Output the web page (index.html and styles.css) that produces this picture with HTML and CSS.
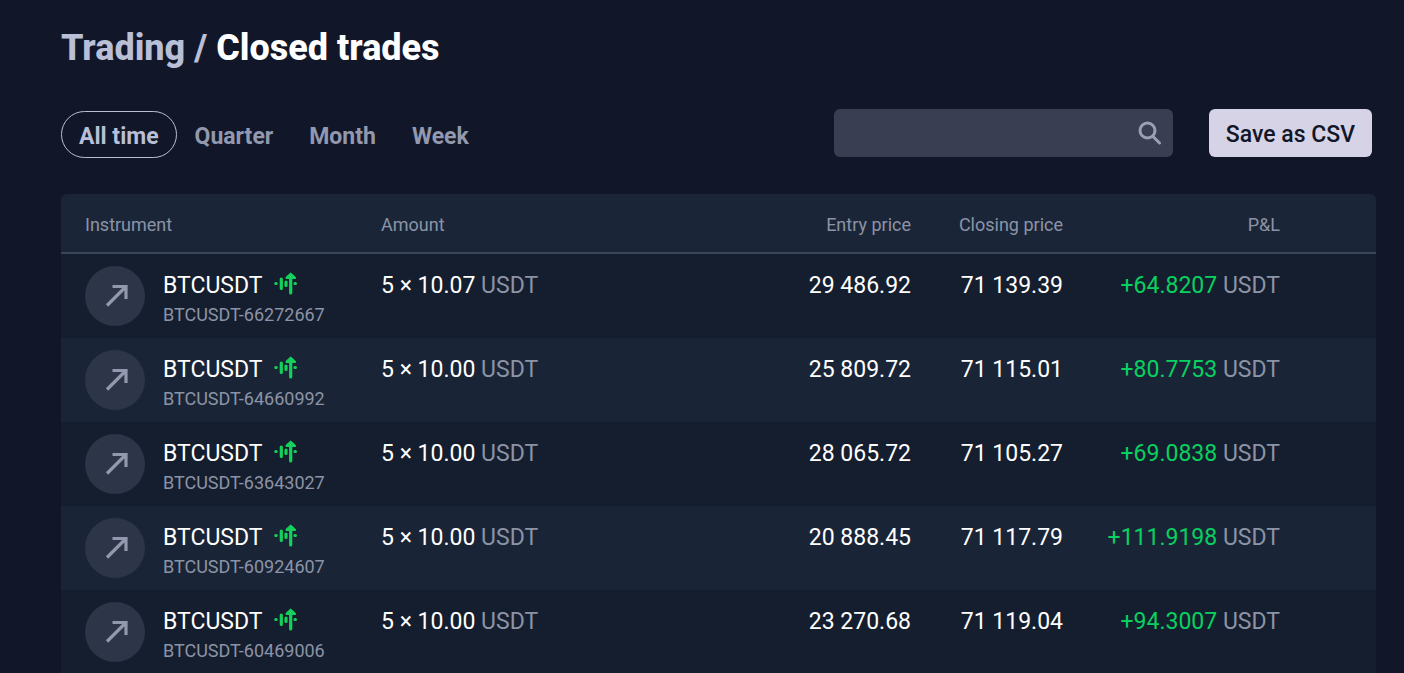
FILE: index.html
```html
<!DOCTYPE html>
<html lang="en">
<head>
    <meta charset="UTF-8">
    <meta name="viewport" content="width=device-width, initial-scale=1">
    <title>Closed trades</title>
    <link rel="stylesheet" href="styles.css">
</head>
<body>
    <svg class="sprite" aria-hidden="true">
        <symbol id="icon-arrow" viewBox="0 0 60 60">
            <path d="M22 39.500L40 21.500M27.500 20.500H41V33" fill="none" stroke="currentColor" stroke-width="3.200"/>
        </symbol>
        <symbol id="icon-signal" viewBox="0 0 24 24">
            <path d="M2.800 11.500h.4M8.300 7v9.500M13 10v3.500M17.700 3v18M22 11.500h.4" fill="none" stroke="currentColor" stroke-width="3.200" stroke-linecap="round"/>
            <path d="M17.700 1L22.500 5.200V6.500H13V5.200Z" fill="currentColor" stroke="currentColor" stroke-linejoin="round"/>
        </symbol>
    </svg>

    <main class="page">
        <h1 class="title"><a class="title-parent" href="#">Trading /</a> Closed trades</h1>

        <div class="toolbar">
            <div class="periods">
                <button class="period active" type="button">All time</button>
                <button class="period" type="button">Quarter</button>
                <button class="period" type="button">Month</button>
                <button class="period" type="button">Week</button>
            </div>
            <form class="search">
                <input class="search-input" type="text" aria-label="Search">
                <button class="search-button" type="submit" aria-label="Search">
                    <svg width="24" height="24" viewBox="0 0 24 24" fill="none" stroke="currentColor" stroke-width="3" stroke-linecap="round">
                        <circle cx="9.500" cy="9.500" r="7.500"/>
                        <path d="M15 15.500L21.500 22"/>
                    </svg>
                </button>
            </form>
            <button class="save" type="button">Save as CSV</button>
        </div>

        <table class="trades">
            <colgroup>
                <col class="col-instrument">
                <col>
                <col class="col-price">
                <col class="col-price">
                <col class="col-pnl">
                <col class="col-end">
            </colgroup>
            <thead>
                <tr>
                    <th>Instrument</th>
                    <th>Amount</th>
                    <th class="number">Entry price</th>
                    <th class="number">Closing price</th>
                    <th class="number">P&amp;L</th>
                    <td></td>
                </tr>
            </thead>
            <tbody>
                <tr>
                    <td>
                        <div class="instrument">
                            <svg class="direction"><use href="#icon-arrow"/></svg>
                            <div>
                                <div class="name">BTCUSDT <svg class="signal"><use href="#icon-signal"/></svg></div>
                                <div class="trade-id">BTCUSDT-66272667</div>
                            </div>
                        </div>
                    </td>
                    <td>5 × 10.07 <span class="unit">USDT</span></td>
                    <td class="number">29 486.92</td>
                    <td class="number">71 139.39</td>
                    <td class="number"><span class="profit">+64.8207</span> <span class="unit">USDT</span></td>
                    <td></td>
                </tr>
                <tr>
                    <td>
                        <div class="instrument">
                            <svg class="direction"><use href="#icon-arrow"/></svg>
                            <div>
                                <div class="name">BTCUSDT <svg class="signal"><use href="#icon-signal"/></svg></div>
                                <div class="trade-id">BTCUSDT-64660992</div>
                            </div>
                        </div>
                    </td>
                    <td>5 × 10.00 <span class="unit">USDT</span></td>
                    <td class="number">25 809.72</td>
                    <td class="number">71 115.01</td>
                    <td class="number"><span class="profit">+80.7753</span> <span class="unit">USDT</span></td>
                    <td></td>
                </tr>
                <tr>
                    <td>
                        <div class="instrument">
                            <svg class="direction"><use href="#icon-arrow"/></svg>
                            <div>
                                <div class="name">BTCUSDT <svg class="signal"><use href="#icon-signal"/></svg></div>
                                <div class="trade-id">BTCUSDT-63643027</div>
                            </div>
                        </div>
                    </td>
                    <td>5 × 10.00 <span class="unit">USDT</span></td>
                    <td class="number">28 065.72</td>
                    <td class="number">71 105.27</td>
                    <td class="number"><span class="profit">+69.0838</span> <span class="unit">USDT</span></td>
                    <td></td>
                </tr>
                <tr>
                    <td>
                        <div class="instrument">
                            <svg class="direction"><use href="#icon-arrow"/></svg>
                            <div>
                                <div class="name">BTCUSDT <svg class="signal"><use href="#icon-signal"/></svg></div>
                                <div class="trade-id">BTCUSDT-60924607</div>
                            </div>
                        </div>
                    </td>
                    <td>5 × 10.00 <span class="unit">USDT</span></td>
                    <td class="number">20 888.45</td>
                    <td class="number">71 117.79</td>
                    <td class="number"><span class="profit">+111.9198</span> <span class="unit">USDT</span></td>
                    <td></td>
                </tr>
                <tr>
                    <td>
                        <div class="instrument">
                            <svg class="direction"><use href="#icon-arrow"/></svg>
                            <div>
                                <div class="name">BTCUSDT <svg class="signal"><use href="#icon-signal"/></svg></div>
                                <div class="trade-id">BTCUSDT-60469006</div>
                            </div>
                        </div>
                    </td>
                    <td>5 × 10.00 <span class="unit">USDT</span></td>
                    <td class="number">23 270.68</td>
                    <td class="number">71 119.04</td>
                    <td class="number"><span class="profit">+94.3007</span> <span class="unit">USDT</span></td>
                    <td></td>
                </tr>
            </tbody>
        </table>
    </main>
</body>
</html>
```

FILE: styles.css
```css
* {
    box-sizing: border-box;
}
body {
    margin: 0;
    background-color: #111728;
    color: #fff;
    font-family: Roboto, sans-serif;
    font-size: 23px;
}
button, input {
    font-family: inherit;
    font-size: 23px;
    border: none;
}
button {
    cursor: pointer;
}
.sprite {
    display: none;
}
.page {
    padding: 24px 28px 0 61px;
}
.title {
    margin: 0;
    font-size: 36px;
    line-height: 48px;
    font-weight: 800;
}
.title-parent {
    color: #b8bfd6;
    text-decoration: none;
}
.toolbar {
    display: flex;
    align-items: flex-start;
    margin-top: 37px;
    padding-right: 4px;
}
.periods {
    display: flex;
    flex: 1;
    padding-top: 2px;
}
.period {
    height: 47px;
    padding: 4px 17px 0;
    background: none;
    border: 1px solid transparent;
    border-radius: 24px;
    color: #9298ad;
    font-weight: 700;
}
.period.active {
    border-color: #b8bfd6;
    color: #b8bfd6;
}
.search {
    display: flex;
    width: 339px;
    height: 48px;
    margin-right: 36px;
    background-color: #3a3e52;
    border-radius: 6px;
}
.search-input {
    flex: 1;
    min-width: 0;
    padding: 0 12px;
    background: none;
    color: #fff;
    outline: none;
}
.search-button {
    display: flex;
    align-items: center;
    padding: 0 11px;
    background: none;
    color: #9a9fb3;
}
.save {
    height: 48px;
    padding: 2px 17px 0;
    background-color: #d5d3e5;
    border-radius: 6px;
    color: #111728;
    font-weight: 500;
}
.trades {
    width: 100%;
    margin-top: 36px;
    table-layout: fixed;
    border-spacing: 0;
    border-radius: 6px 6px 0 0;
    overflow: hidden;
}
.col-instrument {
    width: 296px;
}
.col-price {
    width: 152px;
}
.col-pnl {
    width: 217px;
}
.col-end {
    width: 72px;
}
.trades th, .trades td {
    padding: 12px 24px;
    line-height: 40px;
    text-align: left;
    vertical-align: top;
    white-space: nowrap;
}
.trades thead th, .trades thead td {
    height: 60px;
    padding: 11px 24px 7px;
    background-color: #1a2638;
    border-bottom: 2px solid #3b4759;
    color: #8c93a6;
    font-size: 18px;
    font-weight: 400;
}
.trades tbody tr {
    background-color: #151e2e;
}
.trades tbody tr:nth-child(even) {
    background-color: #192537;
}
.trades .number {
    padding-left: 0;
    text-align: right;
}
.instrument {
    display: flex;
    gap: 18px;
}
.direction {
    width: 60px;
    height: 60px;
    background-color: #2d3548;
    border-radius: 50%;
    color: #9298ad;
}
.name {
    display: flex;
    gap: 10px;
    height: 40px;
}
.signal {
    width: 24px;
    height: 24px;
    margin-top: 6px;
    color: #15d15a;
}
.trade-id {
    color: #8c93a6;
    font-size: 18px;
    line-height: 18px;
}
.unit {
    color: #8c93a6;
}
.profit {
    color: #07d160;
}
```
